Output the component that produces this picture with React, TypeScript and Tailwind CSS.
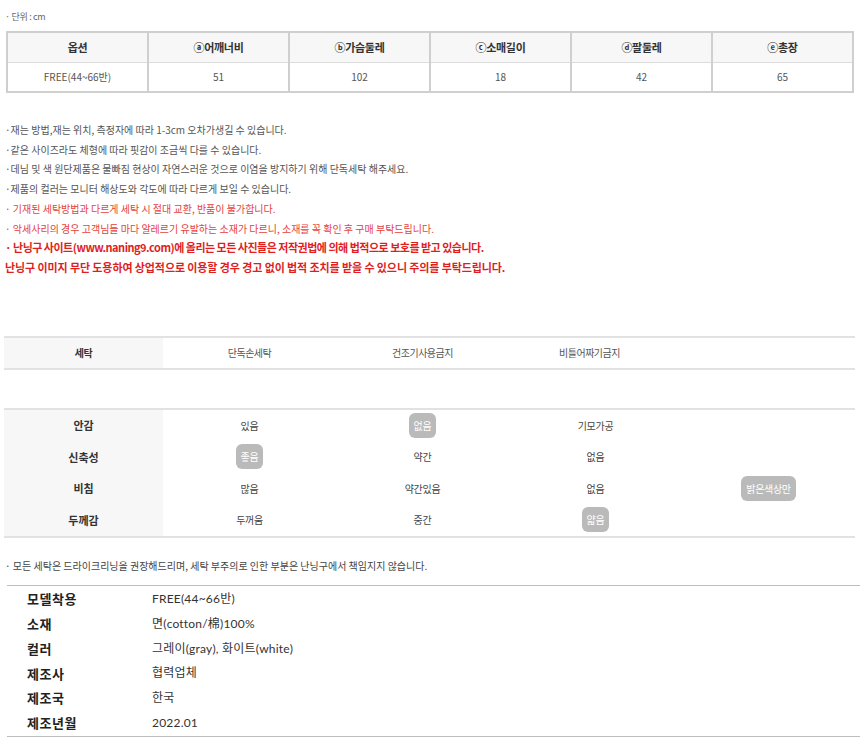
import React from "react";

const sizeHead = ["옵션", "ⓐ어깨너비", "ⓑ가슴둘레", "ⓒ소매길이", "ⓓ팔둘레", "ⓔ총장"];
const sizeRow = ["FREE(44~66반)", "51", "102", "18", "42", "65"];

const notes: { text: string; tone: "gray" | "red" | "bold" | "bold2" }[] = [
  { text: "·재는 방법,재는 위치, 측정자에 따라 1-3cm 오차가생길 수 있습니다.", tone: "gray" },
  { text: "·같은 사이즈라도 체형에 따라 핏감이 조금씩 다를 수 있습니다.", tone: "gray" },
  { text: "·데님 및 색 원단제품은 물빠짐 현상이 자연스러운 것으로 이염을 방지하기 위해 단독세탁 해주세요.", tone: "gray" },
  { text: "·제품의 컬러는 모니터 해상도와 각도에 따라 다르게 보일 수 있습니다.", tone: "gray" },
  { text: "· 기재된 세탁방법과 다르게 세탁 시 절대 교환, 반품이 불가합니다.", tone: "red" },
  { text: "· 악세사리의 경우 고객님들 마다 알레르기 유발하는 소재가 다르니, 소재를 꼭 확인 후 구매 부탁드립니다.", tone: "red" },
  { text: "· 난닝구 사이트(www.naning9.com)에 올리는 모든 사진들은 저작권법에 의해 법적으로 보호를 받고 있습니다.", tone: "bold" },
  { text: "난닝구 이미지 무단 도용하여 상업적으로 이용할 경우 경고 없이 법적 조치를 받을 수 있으니 주의를 부탁드립니다.", tone: "bold2" },
];

const toneClass = {
  gray: "text-[10px] text-[#555]",
  red: "text-[10px] text-[#e5413b]",
  bold: "text-[11px] text-[#e01e1e] font-bold tracking-[-0.5px]",
  bold2: "text-[11px] text-[#e01e1e] font-bold tracking-[-0.1px]",
};

// [label, values[], index of highlighted value]
const fabric: [string, string[], number][] = [
  ["안감", ["있음", "없음", "기모가공", ""], 1],
  ["신축성", ["좋음", "약간", "없음", ""], 0],
  ["비침", ["많음", "약간있음", "없음", "밝은색상만"], 3],
  ["두께감", ["두꺼움", "중간", "얇음", ""], 2],
];

const info: [string, string][] = [
  ["모델착용", "FREE(44~66반)"],
  ["소재", "면(cotton/棉)100%"],
  ["컬러", "그레이(gray), 화이트(white)"],
  ["제조사", "협력업체"],
  ["제조국", "한국"],
  ["제조년월", "2022.01"],
];

const kr = "font-['Noto_Sans_CJK_KR',sans-serif]";

export default function App() {
  return (
    <div className={`w-[860px] h-[744px] overflow-hidden bg-white ${kr}`}>
      <p className="pt-[11px] pl-[5px] text-[9px] leading-[12px] text-[#666] tracking-[-0.3px]">· 단위 : cm</p>

      {/* size table */}
      <table className="mt-[8px] ml-[6px] w-[848px] table-fixed border-collapse border-2 border-[#cfcfcf]">
        <tbody>
          <tr className="h-[30px] bg-[#f7f7f7]">
            {sizeHead.map((h) => (
              <th key={h} className="border-x-2 border-[#cfcfcf] border-b border-b-[#dcdcdc] text-[11px] font-bold text-[#333] tracking-[-0.3px]">
                {h}
              </th>
            ))}
          </tr>
          <tr className="h-[30px]">
            {sizeRow.map((v, i) => (
              <td key={i} className="border-x-2 border-[#cfcfcf] text-center text-[10px] text-[#555]">
                {v}
              </td>
            ))}
          </tr>
        </tbody>
      </table>

      {/* notes */}
      <div className="mt-[27px] pl-[5px]">
        {notes.map((n, i) => (
          <p key={i} className={`leading-[19.7px] whitespace-nowrap ${toneClass[n.tone]}`}>
            {n.text}
          </p>
        ))}
      </div>

      {/* laundry */}
      <div className="mt-[58px] ml-[4px] w-[851px] grid grid-cols-[159px_repeat(4,173px)] h-[34px] border-y-2 border-[#e2e2e2] text-[10px] text-[#555] tracking-[-0.5px]">
        <div className="flex items-center justify-center bg-[#f7f7f7] font-bold text-[#333]">세탁</div>
        <div className="flex items-center justify-center">단독손세탁</div>
        <div className="flex items-center justify-center">건조기사용금지</div>
        <div className="flex items-center justify-center -translate-x-[6px]">비틀어짜기금지</div>
        <div />
      </div>

      {/* fabric */}
      <div className="mt-[38px] ml-[4px] w-[851px] border-y-2 border-[#e2e2e2]">
        {fabric.map(([label, vals, hi]) => (
          <div key={label} className="grid grid-cols-[159px_repeat(4,173px)] h-[31.5px]">
            <div className="flex items-center justify-center bg-[#f7f7f7] text-[11px] font-bold text-[#333]">{label}</div>
            {vals.map((v, i) => (
              <div key={i} className="flex items-center justify-center text-[10px] text-[#444] tracking-[-0.3px]">
                {v &&
                  (i === hi ? (
                    <span className="rounded-[6px] bg-[#bababa] px-[5px] h-[25px] leading-[25px] text-white">{v}</span>
                  ) : (
                    v
                  ))}
              </div>
            ))}
          </div>
        ))}
      </div>

      <p className="mt-[18px] pl-[5px] text-[10px] leading-[20px] text-[#444]">
        · 모든 세탁은 드라이크리닝을 권장해드리며, 세탁 부주의로 인한 부분은 난닝구에서 책임지지 않습니다.
      </p>

      {/* product info */}
      <div className="mt-[9px] ml-[7px] w-[853px] border-y border-[#bdbdbd] py-[1px]">
        {info.map(([k, v]) => (
          <div key={k} className="flex items-center h-[24.8px]">
            <span className="w-[145px] pl-[20px] text-[13px] font-bold text-[#222] tracking-[0.5px]">{k}</span>
            <span className="font-['Lato','Noto_Sans_CJK_KR',sans-serif] text-[12px] text-[#333] tracking-[0.2px]">{v}</span>
          </div>
        ))}
      </div>
    </div>
  );
}
